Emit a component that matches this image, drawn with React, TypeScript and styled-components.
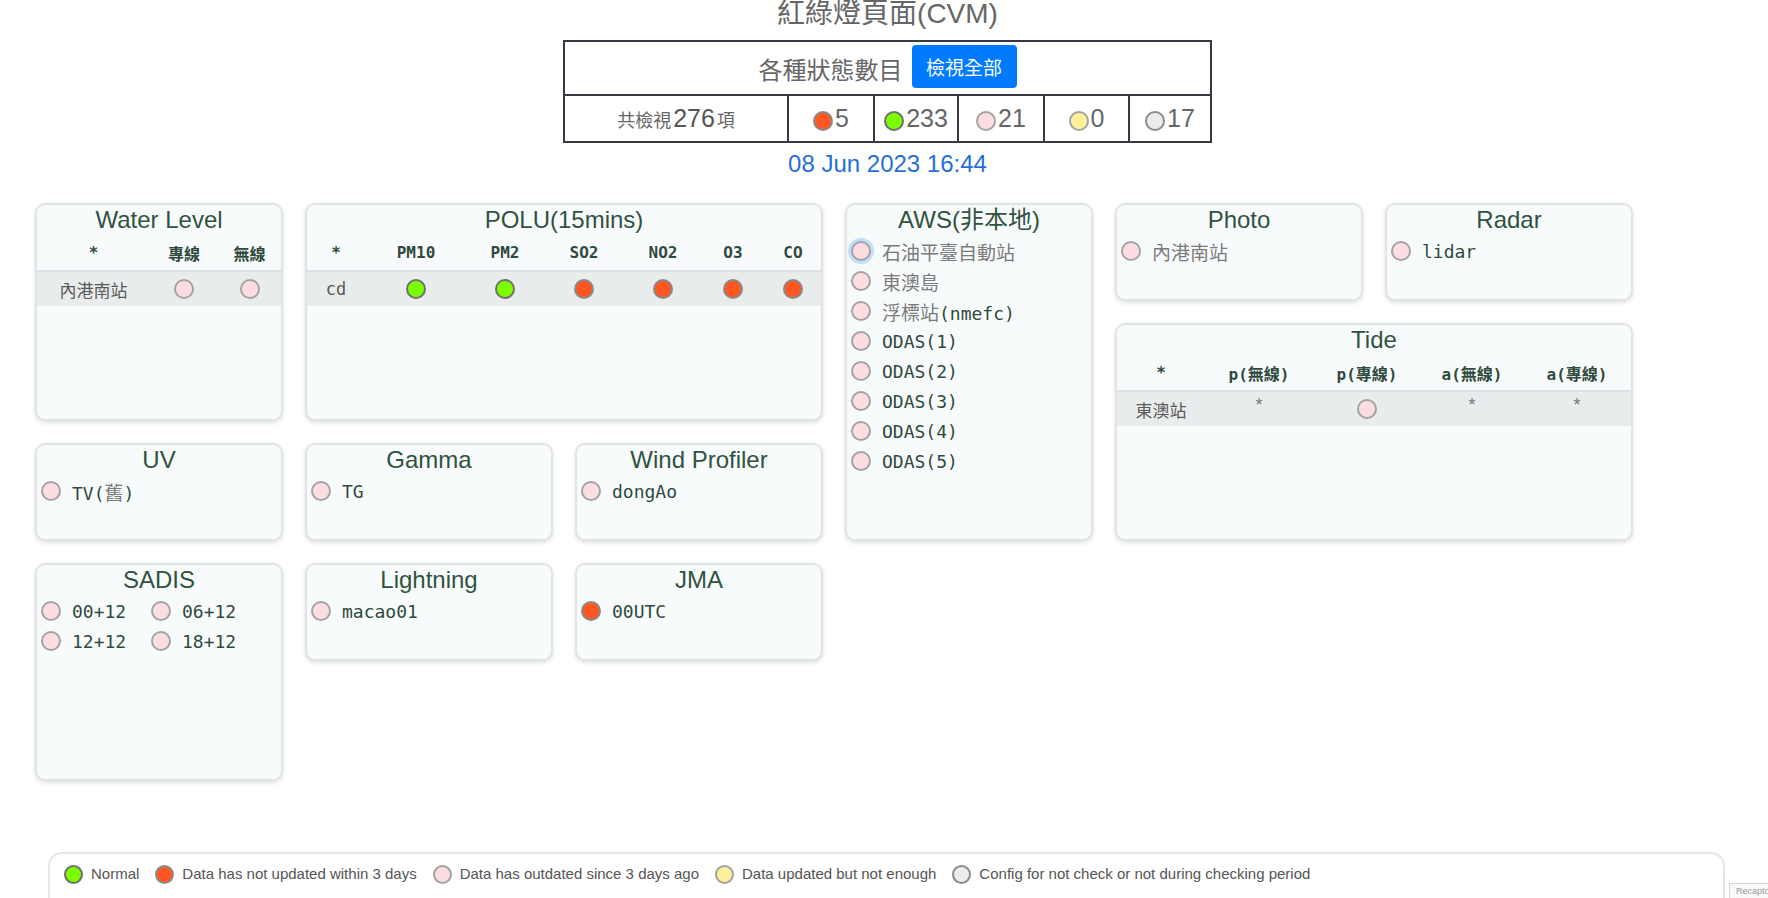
import React from 'react';
import styled, { createGlobalStyle } from 'styled-components';

const GlobalStyle = createGlobalStyle`
  html, body {
    margin: 0;
    padding: 0;
    background: #ffffff;
    overflow: hidden;
  }
  body {
    font-family: "Liberation Sans", "Noto Sans CJK TC", sans-serif;
    color: #333;
  }
  * {
    box-sizing: border-box;
  }
`;

const STATUS: Record<string, { bg: string; border: string }> = {
  red: { bg: '#ff5722', border: '#8a8a8a' },
  green: { bg: '#7cfc00', border: '#6f6f6f' },
  pink: { bg: '#fddde1', border: '#a3a3a3' },
  yellow: { bg: '#fff09c', border: '#a3a3a3' },
  gray: { bg: '#ececec', border: '#8a8a8a' },
};

type Status = keyof typeof STATUS;

const Page = styled.div`
  width: 1768px;
  min-height: 898px;
`;

const Header = styled.div`
  padding-left: 7px;
  display: flex;
  flex-direction: column;
  align-items: center;
`;

const Title = styled.h3`
  margin: -2px 0 0;
  font-size: 28px;
  font-weight: 400;
  line-height: 32px;
  color: #666;
`;

const CountTable = styled.div`
  width: 649px;
  margin-top: 10px;
  border: 2px solid #343a40;
`;

const CountTop = styled.div`
  height: 52px;
  display: flex;
  align-items: center;
  justify-content: center;
  gap: 9px;
`;

const CountTopText = styled.span`
  font-size: 24px;
  color: #666;
`;

const ViewAllButton = styled.button`
  width: 105px;
  height: 43px;
  margin-top: -4px;
  border: none;
  border-radius: 4px;
  background: #007bff;
  color: #fff;
  font-family: "Liberation Sans", "Noto Sans CJK TC", sans-serif;
  font-size: 19px;
  cursor: pointer;
`;

const CountRow = styled.div`
  display: grid;
  grid-template-columns: 222px 86px 84px 86px 85px 1fr;
  border-top: 2px solid #343a40;
  height: 47px;
`;

const CountCell = styled.div<{ $first?: boolean }>`
  display: flex;
  align-items: center;
  justify-content: center;
  gap: 2px;
  color: #666;
  font-size: ${p => (p.$first ? '18px' : '25px')};
  border-left: ${p => (p.$first ? 'none' : '2px solid #343a40')};
`;

const Big = styled.span`
  font-size: 25px;
  color: #555;
`;

const Dot = styled.span<{ $status: Status; $focus?: boolean; $size?: number }>`
  display: inline-block;
  flex: none;
  width: ${p => p.$size ?? 20}px;
  height: ${p => p.$size ?? 20}px;
  border-radius: 50%;
  background: ${p => STATUS[p.$status].bg};
  border: 2px solid ${p => STATUS[p.$status].border};
  box-shadow: ${p => (p.$focus ? '0 0 0 3px rgba(0, 123, 255, 0.22)' : 'none')};
`;

const CountDot = styled(Dot)`
  margin-top: 5px;
`;

const DateLine = styled.div`
  margin-top: 3px;
  font-size: 24px;
  line-height: 36px;
  color: #1f6fdc;
`;

const Grid = styled.div`
  display: grid;
  grid-template-columns: repeat(6, 248px);
  grid-auto-rows: 98px;
  gap: 22px;
  padding-left: 35px;
  margin-top: 21px;
`;

const Card = styled.div<{ $col: string; $row: string }>`
  grid-column: ${p => p.$col};
  grid-row: ${p => p.$row};
  background: #f8fbfc;
  border: 2px solid #e1e4e5;
  border-radius: 10px;
  box-shadow: 0 2px 4px rgba(0, 0, 0, 0.12);
  overflow: hidden;
`;

const CardTitle = styled.div`
  text-align: center;
  font-size: 24px;
  line-height: 30px;
  color: #31523f;
`;

const ItemList = styled.div<{ $cols?: number }>`
  display: grid;
  grid-template-columns: ${p => (p.$cols ? `repeat(${p.$cols}, 110px)` : '1fr')};
  padding: 1px 0 0 4px;
`;

const Item = styled.div`
  display: flex;
  align-items: center;
  gap: 11px;
  height: 30px;
`;

const ItemLabel = styled.span`
  font-family: "DejaVu Sans Mono", "Noto Sans CJK TC", monospace;
  font-size: 18px;
  color: #2f4a3c;
  white-space: nowrap;
`;

const Cjk = styled.span`
  font-family: "Noto Sans CJK TC", sans-serif;
  font-size: 19px;
  color: #7a7a7a;
`;

const TableRow = styled.div<{ $cols: string; $head?: boolean }>`
  display: grid;
  grid-template-columns: ${p => p.$cols};
  align-items: center;
  height: ${p => (p.$head ? '35px' : '36px')};
  background: ${p => (p.$head ? 'transparent' : '#e9eced')};
  border-top: ${p => (p.$head ? 'none' : '2px solid #dee2e6')};
`;

const HeadCell = styled.div`
  text-align: center;
  font-family: "DejaVu Sans Mono", "Noto Sans CJK TC", monospace;
  font-size: 16px;
  font-weight: 700;
  color: #2f4a3c;
  white-space: nowrap;
`;

const DataCell = styled.div<{ $mono?: boolean }>`
  display: flex;
  justify-content: center;
  align-items: center;
  font-family: ${p =>
    p.$mono ? '"DejaVu Sans Mono", monospace' : '"Noto Sans CJK TC", "Liberation Sans", sans-serif'};
  font-size: 17px;
  color: #5a5a5a;
`;

const Star = styled.span`
  font-family: "Liberation Sans", sans-serif;
  font-size: 18px;
  color: #777;
  margin-top: -8px;
`;

const Legend = styled.div`
  margin: 71px 43px 0 48px;
  height: 90px;
  border: 2px solid #e6e6e6;
  border-bottom: none;
  border-radius: 14px 14px 0 0;
  padding: 10px 14px;
  display: flex;
  align-items: flex-start;
  gap: 16px;
`;

const LegendItem = styled.div`
  display: flex;
  align-items: center;
  gap: 8px;
  font-size: 15px;
  color: #555;
  line-height: 20px;
`;

const Badge = styled.div`
  position: fixed;
  left: 1729px;
  top: 883px;
  width: 256px;
  height: 60px;
  border: 1px solid #d6d6d6;
  background: #f9f9f9;
  padding: 2px 0 0 6px;
  font-size: 9px;
  line-height: 10px;
  color: #9a9a9a;
`;

const cjkRe = /([\u3400-\u9fff\uf900-\ufaff]+)/;

const Label: React.FC<{ text: string }> = ({ text }) => (
  <ItemLabel>
    {text.split(cjkRe).map((part, i) =>
      cjkRe.test(part) ? <Cjk key={i}>{part}</Cjk> : <React.Fragment key={i}>{part}</React.Fragment>
    )}
  </ItemLabel>
);

type ListCard = {
  title: string;
  col: string;
  row: string;
  cols?: number;
  items: { label: string; status: Status; focus?: boolean }[];
};

const listCards: ListCard[] = [
  {
    title: 'AWS(非本地)',
    col: '4',
    row: '1 / span 3',
    items: [
      { label: '石油平臺自動站', status: 'pink', focus: true },
      { label: '東澳島', status: 'pink' },
      { label: '浮標站(nmefc)', status: 'pink' },
      { label: 'ODAS(1)', status: 'pink' },
      { label: 'ODAS(2)', status: 'pink' },
      { label: 'ODAS(3)', status: 'pink' },
      { label: 'ODAS(4)', status: 'pink' },
      { label: 'ODAS(5)', status: 'pink' },
    ],
  },
  { title: 'Photo', col: '5', row: '1', items: [{ label: '內港南站', status: 'pink' }] },
  { title: 'Radar', col: '6', row: '1', items: [{ label: 'lidar', status: 'pink' }] },
  { title: 'UV', col: '1', row: '3', items: [{ label: 'TV(舊)', status: 'pink' }] },
  { title: 'Gamma', col: '2', row: '3', items: [{ label: 'TG', status: 'pink' }] },
  { title: 'Wind Profiler', col: '3', row: '3', items: [{ label: 'dongAo', status: 'pink' }] },
  {
    title: 'SADIS',
    col: '1',
    row: '4 / span 2',
    cols: 2,
    items: [
      { label: '00+12', status: 'pink' },
      { label: '06+12', status: 'pink' },
      { label: '12+12', status: 'pink' },
      { label: '18+12', status: 'pink' },
    ],
  },
  { title: 'Lightning', col: '2', row: '4', items: [{ label: 'macao01', status: 'pink' }] },
  { title: 'JMA', col: '3', row: '4', items: [{ label: '00UTC', status: 'red' }] },
];

const counts: { status: Status; value: number }[] = [
  { status: 'red', value: 5 },
  { status: 'green', value: 233 },
  { status: 'pink', value: 21 },
  { status: 'yellow', value: 0 },
  { status: 'gray', value: 17 },
];

const legend: { status: Status; text: string }[] = [
  { status: 'green', text: 'Normal' },
  { status: 'red', text: 'Data has not updated within 3 days' },
  { status: 'pink', text: 'Data has outdated since 3 days ago' },
  { status: 'yellow', text: 'Data updated but not enough' },
  { status: 'gray', text: 'Config for not check or not during checking period' },
];

const poluCols = '58px 102px 76px 82px 76px 64px 1fr';
const poluHead = ['*', 'PM10', 'PM2', 'SO2', 'NO2', 'O3', 'CO'];
const poluRow: Status[] = ['green', 'green', 'red', 'red', 'red', 'red'];

const tideCols = '88px 108px 108px 102px 1fr';
const tideHead = ['*', 'p(無線)', 'p(專線)', 'a(無線)', 'a(專線)'];

const App: React.FC = () => {
  return (
    <Page>
      <GlobalStyle />
      <Header>
        <Title>紅綠燈頁面(CVM)</Title>
        <CountTable>
          <CountTop>
            <CountTopText>各種狀態數目</CountTopText>
            <ViewAllButton>檢視全部</ViewAllButton>
          </CountTop>
          <CountRow>
            <CountCell $first>
              共檢視<Big>276</Big>項
            </CountCell>
            {counts.map(c => (
              <CountCell key={c.status}>
                <CountDot $status={c.status} />
                {c.value}
              </CountCell>
            ))}
          </CountRow>
        </CountTable>
        <DateLine>08 Jun 2023 16:44</DateLine>
      </Header>

      <Grid>
        <Card $col="1" $row="1 / span 2">
          <CardTitle>Water Level</CardTitle>
          <TableRow $cols="113px 68px 1fr" $head>
            <HeadCell>*</HeadCell>
            <HeadCell>專線</HeadCell>
            <HeadCell>無線</HeadCell>
          </TableRow>
          <TableRow $cols="113px 68px 1fr">
            <DataCell>內港南站</DataCell>
            <DataCell>
              <Dot $status="pink" />
            </DataCell>
            <DataCell>
              <Dot $status="pink" />
            </DataCell>
          </TableRow>
        </Card>

        <Card $col="2 / span 2" $row="1 / span 2">
          <CardTitle>POLU(15mins)</CardTitle>
          <TableRow $cols={poluCols} $head>
            {poluHead.map(h => (
              <HeadCell key={h}>{h}</HeadCell>
            ))}
          </TableRow>
          <TableRow $cols={poluCols}>
            <DataCell $mono>cd</DataCell>
            {poluRow.map((s, i) => (
              <DataCell key={i}>
                <Dot $status={s} />
              </DataCell>
            ))}
          </TableRow>
        </Card>

        {listCards.map(card => (
          <Card key={card.title} $col={card.col} $row={card.row}>
            <CardTitle>{card.title}</CardTitle>
            <ItemList $cols={card.cols}>
              {card.items.map(item => (
                <Item key={item.label}>
                  <Dot $status={item.status} $focus={item.focus} />
                  <Label text={item.label} />
                </Item>
              ))}
            </ItemList>
          </Card>
        ))}

        <Card $col="5 / span 2" $row="2 / span 2">
          <CardTitle>Tide</CardTitle>
          <TableRow $cols={tideCols} $head>
            {tideHead.map(h => (
              <HeadCell key={h}>{h}</HeadCell>
            ))}
          </TableRow>
          <TableRow $cols={tideCols}>
            <DataCell>東澳站</DataCell>
            <DataCell>
              <Star>*</Star>
            </DataCell>
            <DataCell>
              <Dot $status="pink" />
            </DataCell>
            <DataCell>
              <Star>*</Star>
            </DataCell>
            <DataCell>
              <Star>*</Star>
            </DataCell>
          </TableRow>
        </Card>
      </Grid>

      <Legend>
        {legend.map(l => (
          <LegendItem key={l.text}>
            <Dot $status={l.status} $size={19} />
            {l.text}
          </LegendItem>
        ))}
      </Legend>
      <Badge>Recaptcha</Badge>
    </Page>
  );
};

export default App;
